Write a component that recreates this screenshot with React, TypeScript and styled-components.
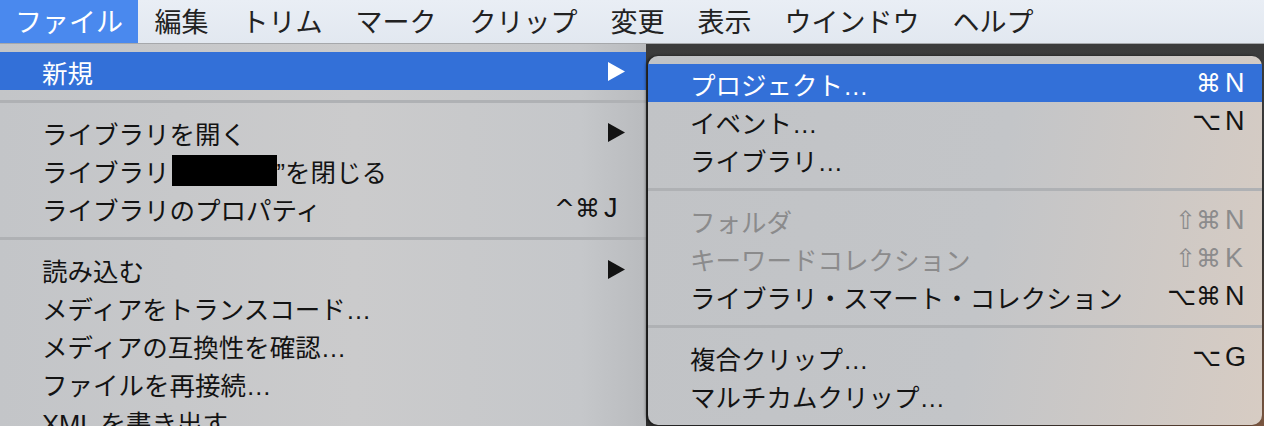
import React from "react";
import styled, { createGlobalStyle } from "styled-components";

const Global = createGlobalStyle`
  html, body { margin: 0; padding: 0; background: #2c2c2c; }
  body {
    width: 1264px; height: 426px; overflow: hidden;
    font-family: "Liberation Sans", "Noto Sans CJK JP", sans-serif;
    -webkit-font-smoothing: antialiased;
  }
`;

const Screen = styled.div`
  width: 1264px;
  height: 426px;
  display: flex;
  flex-direction: column;
  overflow: hidden;
`;

const MenuBar = styled.nav`
  height: 43px;
  flex: none;
  display: flex;
  align-items: stretch;
  background: linear-gradient(#e9eef5, #e2e8f0);
  border-bottom: 1px solid #a6a8ab;
`;

const BarItem = styled.div<{ $active?: boolean }>`
  display: flex;
  align-items: center;
  padding: 0 16.5px 2px;
  font-size: 27px;
  color: ${(p) => (p.$active ? "#ffffff" : "#222222")};
  background: ${(p) => (p.$active ? "#4a89ee" : "transparent")};
  &:first-child { padding-left: 15px; padding-right: 15px; }
`;

const Body = styled.div`
  flex: 1;
  display: flex;
  min-height: 0;
`;

const MainMenu = styled.div`
  width: 646px;
  flex: none;
  padding-top: 8px;
  background: linear-gradient(90deg, #c3c5c8 0%, #cbcbcc 55%, #c5c7ca 90%, #b9bbbe 100%);
`;

const Side = styled.div`
  flex: 1;
  min-width: 0;
  padding: 12px 2px 0 2px;
  background:
    radial-gradient(ellipse at 100% 100%, #7a5640 0%, rgba(122, 86, 64, 0) 35%),
    linear-gradient(180deg, #3c3c3c 0%, #2e2e2e 100%);
`;

const SubMenu = styled.div`
  border-radius: 10px;
  padding: 8px 0 11px;
  background: linear-gradient(100deg, #c1c3c6 0%, #c3c5c8 55%, #d7ccc3 100%);
  box-shadow: -2px 0 3px rgba(0, 0, 0, 0.55);
`;

const Row = styled.div<{ $hl?: boolean; $off?: boolean; $pr: number }>`
  height: 38px;
  display: flex;
  align-items: center;
  justify-content: space-between;
  padding: 0 ${(p) => p.$pr}px 0 42px;
  font-size: 25.5px;
  white-space: nowrap;
  color: ${(p) => (p.$hl ? "#ffffff" : p.$off ? "#8b8b8c" : "#131313")};
  background: ${(p) => (p.$hl ? "#3370d8" : "transparent")};
`;

const Label = styled.span`
  display: flex;
  align-items: center;
`;

const Separator = styled.div`
  height: 23px;
  display: flex;
  align-items: center;
  &::before {
    content: "";
    flex: 1;
    height: 3px;
    background: #afb1b4;
  }
`;

const Redacted = styled.span`
  display: inline-block;
  width: 105px;
  height: 31px;
  margin-left: 2px;
  background: #000;
`;

const Shortcut = styled.span`
  display: flex;
  align-items: center;
  gap: 4px;
  font-family: "Liberation Sans", "DejaVu Sans", sans-serif;
`;

const Mods = styled.span`
  font-family: "DejaVu Sans", sans-serif;
  font-size: 25px;
`;

const Key = styled.span`
  min-width: 21px;
  font-size: 27px;
  text-align: left;
`;

const Arrow = () => (
  <svg width="17" height="19" viewBox="0 0 17 19" aria-hidden="true">
    <polygon points="0,0 17,9.5 0,19" fill="currentColor" />
  </svg>
);

type Item =
  | { sep: true }
  | {
      sep?: false;
      label: React.ReactNode;
      hl?: boolean;
      off?: boolean;
      sub?: boolean;
      mods?: string;
      k?: string;
    };

const mainItems: Item[] = [
  { label: "新規", hl: true, sub: true },
  { sep: true },
  { label: "ライブラリを開く", sub: true },
  {
    label: (
      <>
        ライブラリ<Redacted />”を閉じる
      </>
    ),
  },
  { label: "ライブラリのプロパティ", mods: "^⌘", k: "J" },
  { sep: true },
  { label: "読み込む", sub: true },
  { label: "メディアをトランスコード…" },
  { label: "メディアの互換性を確認…" },
  { label: "ファイルを再接続…" },
  { label: "XML を書き出す" },
];

const subItems: Item[] = [
  { label: "プロジェクト…", hl: true, mods: "⌘", k: "N" },
  { label: "イベント…", mods: "⌥", k: "N" },
  { label: "ライブラリ…" },
  { sep: true },
  { label: "フォルダ", off: true, mods: "⇧⌘", k: "N" },
  { label: "キーワードコレクション", off: true, mods: "⇧⌘", k: "K" },
  { label: "ライブラリ・スマート・コレクション", mods: "⌥⌘", k: "N" },
  { sep: true },
  { label: "複合クリップ…", mods: "⌥", k: "G" },
  { label: "マルチカムクリップ…" },
];

const renderItems = (items: Item[], pr: number) =>
  items.map((it, i) =>
    it.sep ? (
      <Separator key={i} />
    ) : (
      <Row key={i} $hl={it.hl} $off={it.off} $pr={pr}>
        <Label>{it.label}</Label>
        {it.sub ? (
          <Arrow />
        ) : it.k ? (
          <Shortcut>
            <Mods>{it.mods}</Mods>
            <Key>{it.k}</Key>
          </Shortcut>
        ) : null}
      </Row>
    )
  );

const barItems = ["ファイル", "編集", "トリム", "マーク", "クリップ", "変更", "表示", "ウインドウ", "ヘルプ"];

export default function App() {
  return (
    <Screen>
      <Global />
      <MenuBar>
        {barItems.map((t, i) => (
          <BarItem key={t} $active={i === 0}>
            {t}
          </BarItem>
        ))}
      </MenuBar>
      <Body>
        <MainMenu>{renderItems(mainItems, 21)}</MainMenu>
        <Side>
          <SubMenu>{renderItems(subItems, 16)}</SubMenu>
        </Side>
      </Body>
    </Screen>
  );
}
